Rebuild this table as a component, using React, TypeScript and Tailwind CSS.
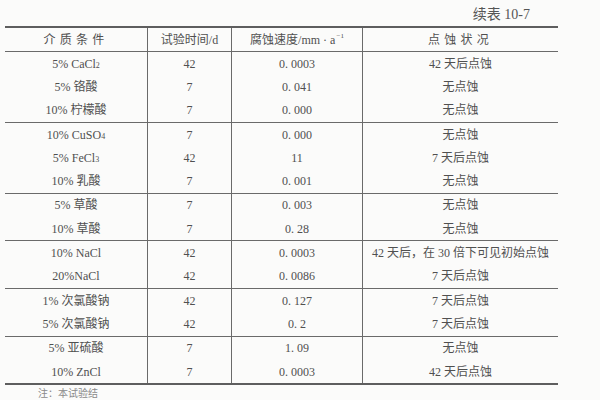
import React from 'react';

type Row = { medium: React.ReactNode; days: string; rate: string; note: string };

const groups: Row[][] = [
  [
    { medium: <>5% CaCl<sub className="text-[8px] align-[-2px]">2</sub></>, days: '42', rate: '0.0003', note: '42 天后点蚀' },
    { medium: '5% 铬酸', days: '7', rate: '0.041', note: '无点蚀' },
    { medium: '10% 柠檬酸', days: '7', rate: '0.000', note: '无点蚀' },
  ],
  [
    { medium: <>10% CuSO<sub className="text-[8px] align-[-2px]">4</sub></>, days: '7', rate: '0.000', note: '无点蚀' },
    { medium: <>5% FeCl<sub className="text-[8px] align-[-2px]">3</sub></>, days: '42', rate: '11', note: '7 天后点蚀' },
    { medium: '10% 乳酸', days: '7', rate: '0.001', note: '无点蚀' },
  ],
  [
    { medium: '5% 草酸', days: '7', rate: '0.003', note: '无点蚀' },
    { medium: '10% 草酸', days: '7', rate: '0.28', note: '无点蚀' },
  ],
  [
    { medium: '10% NaCl', days: '42', rate: '0.0003', note: '42 天后，在 30 倍下可见初始点蚀' },
    { medium: '20%NaCl', days: '42', rate: '0.0086', note: '7 天后点蚀' },
  ],
  [
    { medium: '1% 次氯酸钠', days: '42', rate: '0.127', note: '7 天后点蚀' },
    { medium: '5% 次氯酸钠', days: '42', rate: '0.2', note: '7 天后点蚀' },
  ],
  [
    { medium: '5% 亚硫酸', days: '7', rate: '1.09', note: '无点蚀' },
    { medium: '10% ZnCl', days: '7', rate: '0.0003', note: '42 天后点蚀' },
  ],
];

const cols = 'grid grid-cols-[143px_84px_131px_195px]';
const cell = 'flex items-center justify-center h-[23.3px]';
const sep = 'border-r border-[#6a6a6a]';

// scanned book style: "0. 0003"
const fmt = (s: string) => s.replace(/^(\d)\.(\d)/, '$1. $2');

export default function App() {
  return (
    <div
      className="w-[600px] h-[400px] overflow-hidden bg-[#fbfbfa] text-[#505050] text-[12px]"
      style={{ fontFamily: '"Liberation Serif", "Noto Sans CJK SC", serif' }}
    >
      <div className="h-[26px] flex justify-end pr-[70px] pt-[4px] text-[14px] text-[#555]">续表 10-7</div>
      <div className="ml-[5px] w-[553px] border-t-2 border-b-2 border-[#5e5e5e]">
        <div className={`${cols} border-b border-[#6a6a6a]`}>
          <div className={`${cell} ${sep} h-[23px] tracking-[0.35em]`}>介质条件</div>
          <div className={`${cell} ${sep} h-[23px]`}>试验时间/d</div>
          <div className={`${cell} ${sep} h-[23px]`}>
            腐蚀速度/mm · a<sup className="text-[7px] ml-[1px]">−1</sup>
          </div>
          <div className={`${cell} h-[23px] tracking-[0.35em]`}>点蚀状况</div>
        </div>
        {groups.map((g, gi) => (
          <div key={gi} className={`${cols} ${gi < groups.length - 1 ? 'border-b border-[#6a6a6a]' : ''}`}>
            {g.map((r, ri) => (
              <React.Fragment key={ri}>
                <div className={`${cell} ${sep}`}>{r.medium}</div>
                <div className={`${cell} ${sep}`}>{r.days}</div>
                <div className={`${cell} ${sep}`}>{fmt(r.rate)}</div>
                <div className={cell}>{r.note}</div>
              </React.Fragment>
            ))}
          </div>
        ))}
      </div>
      <div className="pl-[38px] pt-[3px] text-[10px] leading-[11px] text-[#8a8a8a]">注：本试验结</div>
    </div>
  );
}
